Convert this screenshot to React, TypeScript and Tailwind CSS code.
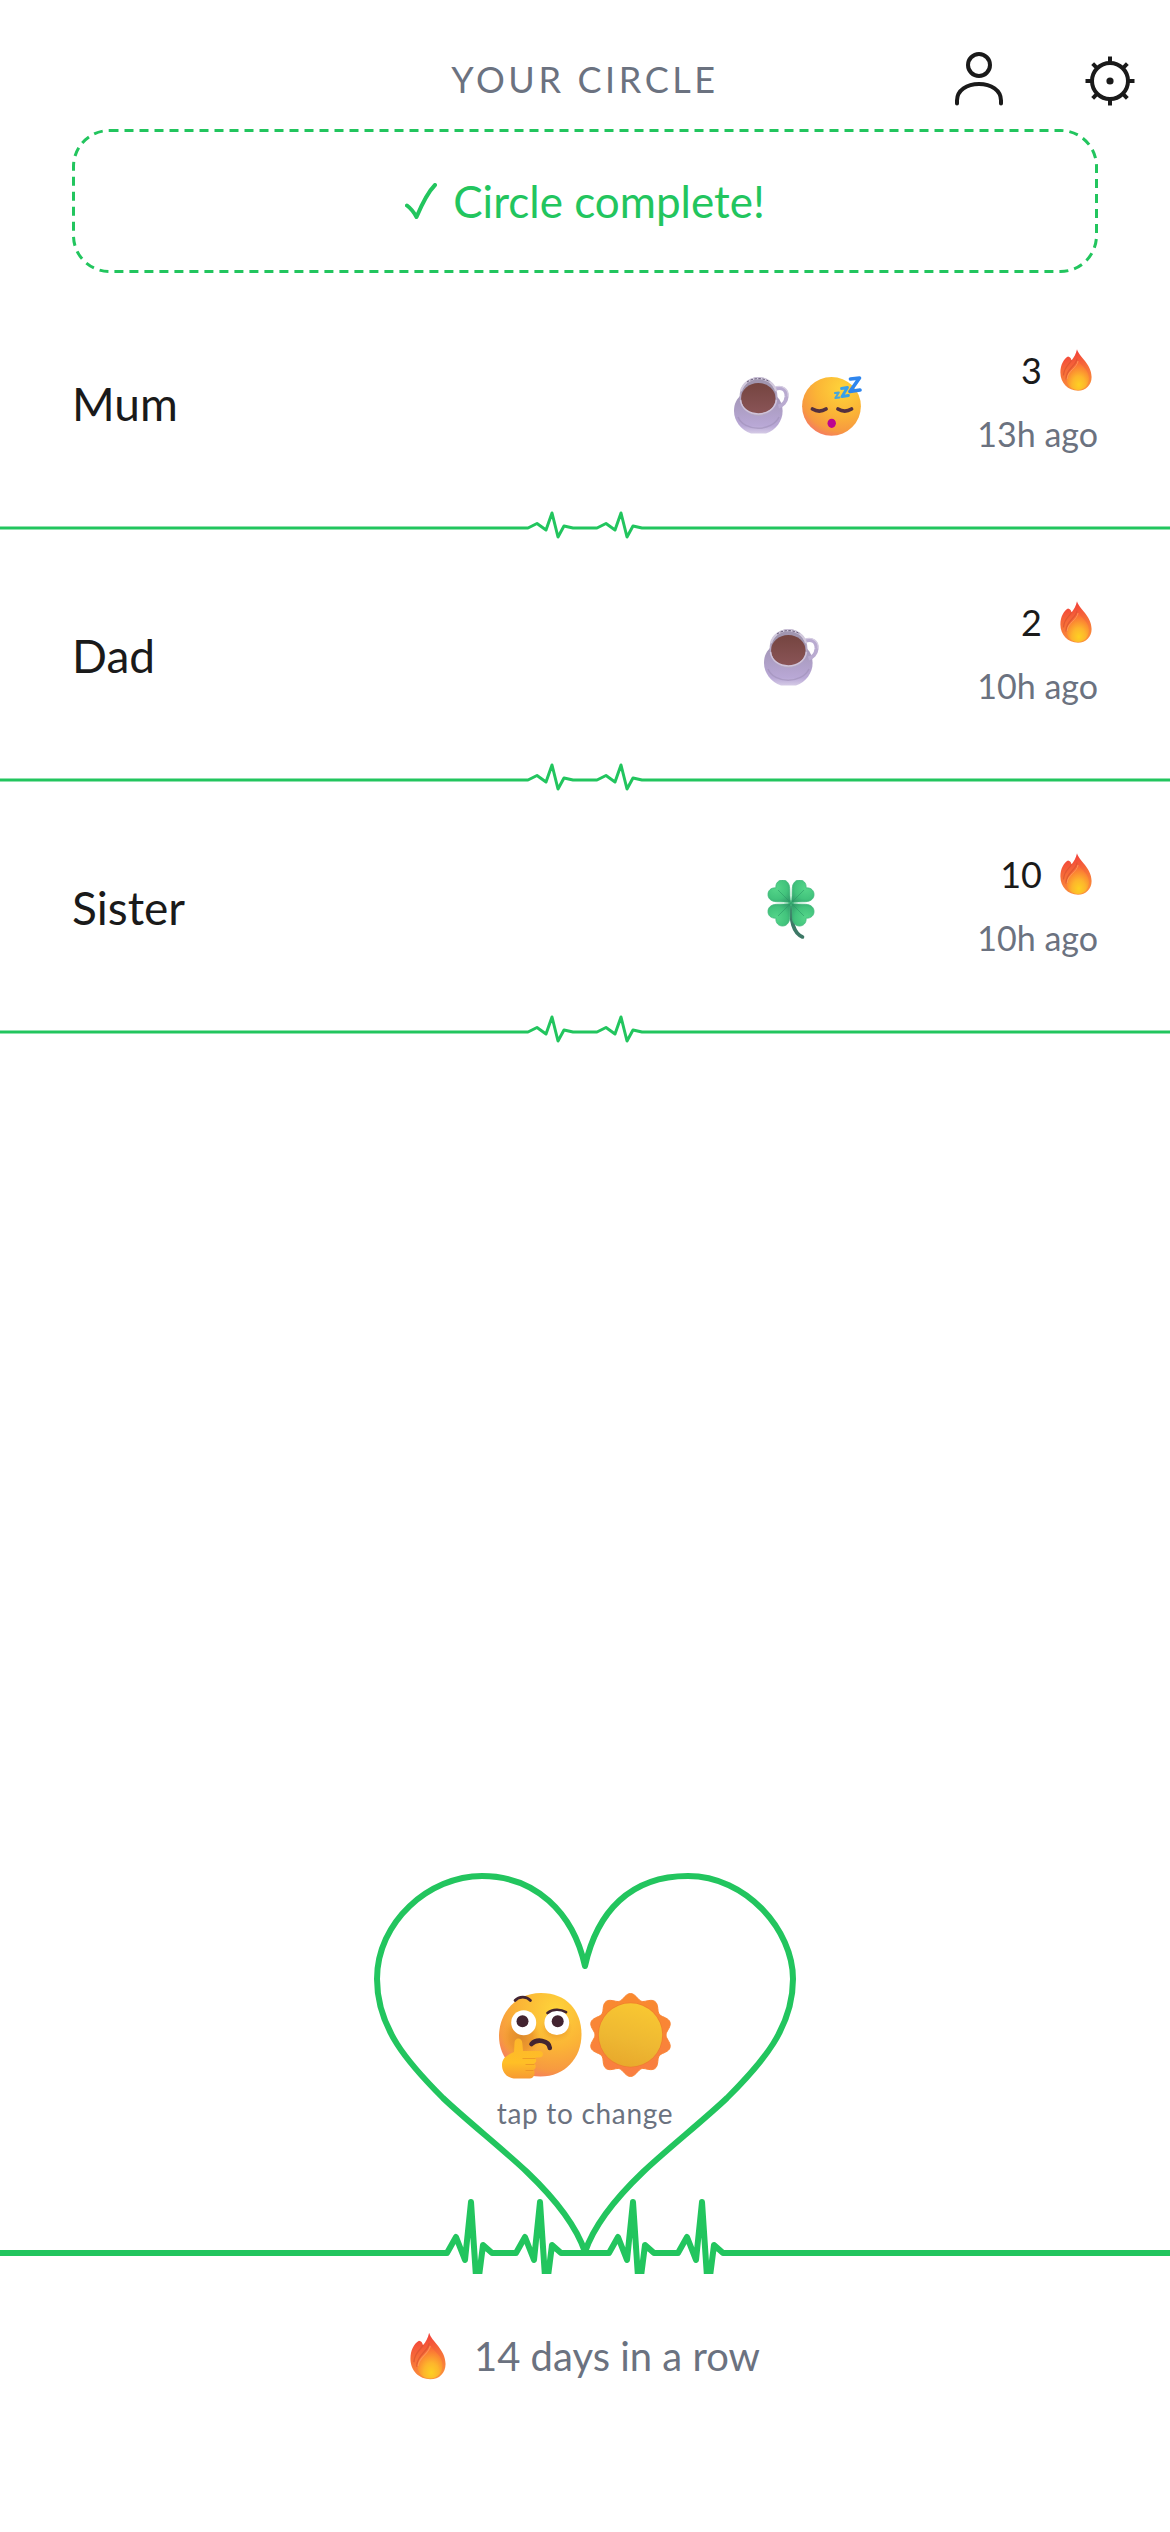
import type { ReactNode } from "react";

function Gradients() {
  return (
    <svg aria-hidden="true" width="0" height="0" className="absolute">
      <defs>
        <linearGradient id="flame" x1="0.4" y1="0" x2="0.6" y2="1">
          <stop offset="0" stopColor="#f23c3a" />
          <stop offset="0.45" stopColor="#f66b38" />
          <stop offset="1" stopColor="#fb923c" />
        </linearGradient>
        <radialGradient id="flameCore" cx="0.55" cy="0.82" r="0.75">
          <stop offset="0" stopColor="#fdd023" />
          <stop offset="0.4" stopColor="#fdb52c" />
          <stop offset="1" stopColor="#fa6a36" />
        </radialGradient>
        <radialGradient id="face" cx="0.68" cy="0.2" r="0.9">
          <stop offset="0" stopColor="#fed43a" />
          <stop offset="0.5" stopColor="#fbb436" />
          <stop offset="0.8" stopColor="#f79a40" />
          <stop offset="1" stopColor="#f5736a" />
        </radialGradient>
        <radialGradient id="faceShade">
          <stop offset="0" stopColor="#dd8a2c" />
          <stop offset="0.6" stopColor="#e8912b" stopOpacity="0.7" />
          <stop offset="1" stopColor="#f0a030" stopOpacity="0" />
        </radialGradient>
        <linearGradient id="hand" x1="0" y1="0" x2="0" y2="1">
          <stop offset="0" stopColor="#fdb62b" />
          <stop offset="0.6" stopColor="#ffbf26" />
          <stop offset="1" stopColor="#f79a33" />
        </linearGradient>
        <linearGradient id="saucer" x1="0" y1="0" x2="0" y2="1">
          <stop offset="0" stopColor="#a497b8" />
          <stop offset="0.8" stopColor="#b9a8d6" />
          <stop offset="1" stopColor="#d5cbe6" />
        </linearGradient>
        <linearGradient id="coffee" x1="0" y1="0" x2="0" y2="1">
          <stop offset="0" stopColor="#754540" />
          <stop offset="1" stopColor="#8a5457" />
        </linearGradient>
        <radialGradient id="leaf" cx="0.35" cy="0.35" r="0.8">
          <stop offset="0" stopColor="#55d68a" />
          <stop offset="0.6" stopColor="#42c37c" />
          <stop offset="1" stopColor="#319a69" />
        </radialGradient>
        <linearGradient id="sunRays" x1="0" y1="0" x2="0" y2="1">
          <stop offset="0" stopColor="#f98a2e" />
          <stop offset="1" stopColor="#f97e42" />
        </linearGradient>
        <linearGradient id="sunDisc" x1="0.7" y1="0" x2="0.4" y2="1">
          <stop offset="0" stopColor="#f9c832" />
          <stop offset="0.6" stopColor="#eeb832" />
          <stop offset="1" stopColor="#e8a92c" />
        </linearGradient>
      </defs>
    </svg>
  );
}

function Fire({ large = false }: { large?: boolean }) {
  return (
    <svg
      role="img"
      aria-label="streak"
      viewBox="0 0 32 42"
      className={large ? "h-12 w-9" : "h-[42px] w-8"}
    >
      <path
        d="M17 .3C19 8 31.6 15 31.6 28c0 8-5.600 13.700-13.600 13.700C8 41.700.4 34 .4 23.500.4 16 3.500 10 8 7.500c2 .3 3 1.500 3.500 4C14 8.500 16 5 17 .3Z"
        fill="url(#flame)"
      />
      <path
        d="M18 12c4 5 11 9 11 17 0 7-4.500 12-11 12-7 0-11.500-5-11.500-11.500C6.500 22 16 20 18 12Z"
        fill="url(#flameCore)"
      />
      <path
        d="M17 10c-1 7-11 10-11 20M11.500 11.500C9 16 4 18 3.500 26"
        fill="none"
        stroke="#d9532f"
        strokeWidth="1.200"
        strokeLinecap="round"
        opacity="0.7"
      />
      <path d="M18 12c-1 7-10.500 10-10.800 18" fill="none" stroke="#ff9a5c" strokeWidth="1" opacity="0.8" />
    </svg>
  );
}

function Coffee() {
  return (
    <svg role="img" aria-label="coffee" viewBox="0 0 68 60" className="h-15 w-[68px]">
      <path
        d="M6 20C1 25 0 30 0 35 0 45 7 54 17 57.500h15C42 54 48.600 45 48.600 35c0-6-2-11-6-15Z"
        fill="url(#saucer)"
      />
      <path d="M4 41c6 15 34 15 41 0" fill="none" stroke="#9f90b8" strokeWidth="1.500" opacity="0.6" />
      <path d="M41 13c7-3 12 1 11.500 8-.5 5-4 8.500-8 9.500" fill="none" stroke="#b9abd0" strokeWidth="4" />
      <path d="M40 11.500c8-3 15 1 14 9" fill="none" stroke="#d6cde2" strokeWidth="1.200" />
      <ellipse cx="24.500" cy="20.500" rx="18.900" ry="19.500" fill="#b5a8c4" />
      <ellipse cx="24.500" cy="20" rx="17.400" ry="17.500" fill="#a196b0" />
      <path d="M7 15C12-2 37-2 42 15" fill="none" stroke="#d2cadd" strokeWidth="2.200" />
      <path d="M13 6c6-4.500 17-4.500 23 0" fill="none" stroke="#665b76" strokeWidth="1" strokeDasharray="2.500 1.500" />
      <ellipse cx="24.300" cy="22.500" rx="17.200" ry="15.500" fill="url(#coffee)" />
      <path d="M6.500 24c2 18.500 33.500 18.500 36 0" fill="none" stroke="#cfc3da" strokeWidth="1.500" />
    </svg>
  );
}

function Sleeping() {
  return (
    <svg role="img" aria-label="sleeping" viewBox="0 0 60 60" className="size-15">
      <circle cx="29.500" cy="30.300" r="29.400" fill="url(#face)" />
      <g fill="none" strokeLinecap="round" stroke="#54303f" strokeWidth="3.800">
        <path d="M10.500 33c4.500 2.800 9 2.800 13.500 0" />
        <path d="M36 33c4.500 2.800 9 2.800 13.500 0" />
      </g>
      <ellipse cx="29.700" cy="47.300" rx="4.200" ry="4.600" fill="#bd0490" />
      <g fill="none" strokeLinejoin="round" strokeLinecap="round">
        <path d="M48.500 3 57.500 2 48 15.500l10-1.500" stroke="#2f86ee" strokeWidth="3.600" />
        <path d="M39.500 12.500l6-1-5.500 9 6.500-1" stroke="#38a0ea" strokeWidth="2.800" />
        <path d="M33 17l3.800-.5-3.500 5.500 4.200-.6" stroke="#4aa6d8" strokeWidth="2" />
      </g>
    </svg>
  );
}

const LEAF =
  "M23 23C21.500 18 22 13 21.700 8.500 21.500 3 18.500 0 14.500 0 10.500 0 7.500 3 7.900 7.900 3 7.500 0 10.500 0 14.500c0 4 3 7 8.500 7.200C13 22 18 21.500 23 23Z";

function Clover() {
  return (
    <svg role="img" aria-label="four leaf clover" viewBox="-4 0 68 60" className="h-15 w-[68px]">
      <path d="M23 23c-.5 18 2 30 11.500 34" fill="none" stroke="#3d7866" strokeWidth="3.600" strokeLinecap="round" />
      {[0, 90, 180, 270].map((turn) => (
        <g key={turn} transform={`rotate(${turn} 23 23)`}>
          <path d={LEAF} fill="url(#leaf)" stroke="#3fb878" strokeWidth="0.800" />
          <path d="M23 23 10 10" stroke="#2c9a67" strokeWidth="1" opacity="0.6" />
        </g>
      ))}
    </svg>
  );
}

function Thinking() {
  return (
    <svg role="img" aria-label="thinking" viewBox="0 0 83 86" className="h-[86px] w-[83px]">
      <path
        d="M42 0c26 0 40.500 18 40.500 41.500S66 83.500 41.500 83.500C16 83.500 0 65 0 43S16 0 42 0Z"
        fill="url(#face)"
      />
      <ellipse cx="22" cy="44" rx="19" ry="22" fill="url(#faceShade)" />
      <ellipse cx="57.500" cy="35" rx="16" ry="14" fill="url(#faceShade)" opacity="0.6" />
      <circle cx="24.700" cy="29.700" r="12.500" fill="#fff" />
      <circle cx="57.800" cy="29.700" r="12.400" fill="#fff" />
      <circle cx="23.500" cy="28.300" r="6" fill="#432430" />
      <circle cx="58.700" cy="28.300" r="6" fill="#432430" />
      <g fill="none" stroke="#432430" strokeLinecap="round">
        <path d="M16 7.500c4-4.500 11.500-4.500 15.500 0" strokeWidth="2.700" />
        <path d="M48.500 20c5-4.200 13-4.200 18.500-.8" strokeWidth="2.700" />
        <path d="M32.500 51c5-5.500 17.500-4 18.300 4" strokeWidth="4.600" />
      </g>
      <path
        d="M15.500 50c0-6 7.500-6 7.800 0l.7 8h16.500c4.500 0 4.500 6 .5 6.300l-5 .5c2 2 1.500 5-1 5.700 2.500 1.500 2 5-.3 6.200 2 2.500.8 8.800-3.700 8.800H17C8 85.500 3 79.500 3 72c0-6.500 4-9.500 12-13Z"
        fill="url(#hand)"
      />
      <path
        d="M24 65.500h12M27 71.500h8M27 77.500h7"
        stroke="#e88d25"
        strokeWidth="1.200"
        strokeLinecap="round"
        opacity="0.7"
      />
    </svg>
  );
}

const SUN_EDGE = Array.from({ length: 180 }, (_, i) => {
  const angle = (i * Math.PI) / 90;
  const radius = 38.5 + 3 * Math.cos(10 * angle);
  const x = 40.5 + radius * Math.sin(angle);
  const y = 42 - radius * Math.cos(angle);
  return `${x.toFixed(2)},${y.toFixed(2)}`;
}).join(" ");

function Sun() {
  return (
    <svg role="img" aria-label="sun" viewBox="0 0 81 86" className="h-[86px] w-[81px]">
      <polygon points={SUN_EDGE} fill="url(#sunRays)" stroke="#f98535" strokeWidth="1" strokeLinejoin="round" />
      <circle cx="40.500" cy="42" r="32.500" fill="#ea7a22" opacity="0.5" />
      <circle cx="40.500" cy="42" r="31.700" fill="url(#sunDisc)" />
    </svg>
  );
}

function PersonIcon() {
  return (
    <svg aria-hidden="true" viewBox="0 0 48 54" className="h-[54px] w-12" fill="none" stroke="#1a1a1a" strokeWidth="4" strokeLinecap="round">
      <circle cx="24" cy="13" r="11" />
      <path d="M2 51.500v-3C2 38 12 32 24 32s22 6 22 16.500v3" />
    </svg>
  );
}

function GearIcon() {
  return (
    <svg aria-hidden="true" viewBox="-25 -25 50 50" className="size-[50px]" fill="none" stroke="#1a1a1a">
      <circle r="18" strokeWidth="4" />
      <circle r="3.600" fill="#1a1a1a" stroke="none" />
      {[0, 45, 90, 135, 180, 225, 270, 315].map((turn) => (
        <path key={turn} d="M0-19v-5.500" strokeWidth="4" transform={`rotate(${turn})`} />
      ))}
    </svg>
  );
}

function PulseDivider() {
  return (
    <svg aria-hidden="true" className="block h-[34px] w-full" fill="none">
      <svg x="50%" className="overflow-visible">
        <path
          d="M-3000 17H-57l9-4.500 9 6.500 6-17 6 24 6-11 9 2H12l9-4.500 9 6.500 6-17 6 24 6-11 9 2H3000"
          stroke="#22c55e"
          strokeWidth="3"
          strokeLinejoin="round"
        />
      </svg>
    </svg>
  );
}

function HeartPulse() {
  return (
    <svg aria-hidden="true" className="block h-[414px] w-full [grid-area:1/1]" fill="none">
      <svg x="50%" className="overflow-visible">
        <g stroke="#22c55e" strokeWidth="6" strokeLinejoin="round" strokeLinecap="round">
          <path d="M0 106C-12 52-50 16-103 16S-208 62-208 119C-208 168-177 203-142 238C-120 259-80 291-58 312C-35 334-10 362 0 392C10 362 35 334 58 312C80 291 120 259 142 238C177 203 208 168 208 119S161 16 103 16S12 52 0 106Z" />
          <path d="M-3000 393H-138l9-16 9 23 6-58 6 90 6-47 9 8H-69l9-16 9 23 6-58 6 90 6-47 9 8H24l9-16 9 23 6-58 6 90 6-47 9 8H93l9-16 9 23 6-58 6 90 6-47 9 8H3000" />
        </g>
      </svg>
    </svg>
  );
}

type Member = { name: string; mood: ReactNode; streak: number; seen: string };

const MEMBERS: Member[] = [
  {
    name: "Mum",
    mood: (
      <>
        <Coffee />
        <Sleeping />
      </>
    ),
    streak: 3,
    seen: "13h ago",
  },
  { name: "Dad", mood: <Coffee />, streak: 2, seen: "10h ago" },
  { name: "Sister", mood: <Clover />, streak: 10, seen: "10h ago" },
];

function MemberRow({ name, mood, streak, seen }: Member) {
  return (
    <li>
      <div className="grid h-[218px] grid-cols-[1fr_136px_232px] items-center px-[72px]">
        <h2 className="pt-1 text-[46px] leading-14">{name}</h2>
        <div className="flex justify-center pt-2">{mood}</div>
        <div className="text-right">
          <p className="flex items-center justify-end gap-[18px] pr-1.5 text-[36px] leading-16">
            {streak}
            <Fire />
          </p>
          <p className="text-[34px] leading-16 text-[#6b7280]">{seen}</p>
        </div>
      </div>
      <PulseDivider />
    </li>
  );
}

export default function App() {
  return (
    <div className="flex min-h-screen flex-col bg-white font-['Lato',sans-serif] text-[#1a1a1a]">
      <Gradients />
      <header className="grid h-[129px] grid-cols-[1fr_auto_1fr] items-center pt-7">
        <h1 className="col-start-2 text-[36px] leading-12 tracking-widest text-[#6b7280]">YOUR CIRCLE</h1>
        <div className="flex items-center justify-end gap-[82px] pr-[35px]">
          <button type="button" aria-label="Profile">
            <PersonIcon />
          </button>
          <button type="button" aria-label="Settings" className="pt-1">
            <GearIcon />
          </button>
        </div>
      </header>

      <main>
        <div className="relative mx-[72px] flex h-[144px] items-center justify-center gap-4 text-[44px] text-[#22c55e]">
          <svg aria-hidden="true" className="absolute inset-0 size-full" fill="none">
            <rect
              x="1.5"
              y="1.5"
              rx="36"
              className="h-[calc(100%-3px)] w-[calc(100%-3px)]"
              stroke="#22c55e"
              strokeWidth="3"
              strokeDasharray="9 6"
            />
          </svg>
          <svg aria-hidden="true" viewBox="0 0 32 36" className="h-9 w-8" fill="none" stroke="#22c55e" strokeWidth="4" strokeLinecap="round" strokeLinejoin="round">
            <path d="M2 22.500c4 3 7 7 9.500 11.500C17 21 22 10 30 2" />
          </svg>
          <p>Circle complete!</p>
        </div>

        <ul className="mt-5">
          {MEMBERS.map((member) => (
            <MemberRow key={member.name} {...member} />
          ))}
        </ul>
      </main>

      <footer className="mt-auto pb-[148px]">
        <div className="grid">
          <HeartPulse />
          <button
            type="button"
            className="mt-[133px] flex flex-col items-center gap-3.5 self-start justify-self-center [grid-area:1/1]"
          >
            <span className="flex gap-2">
              <Thinking />
              <Sun />
            </span>
            <span className="text-[28px] leading-10 tracking-wide text-[#6b7280]">tap to change</span>
          </button>
        </div>
        <p className="mt-[54px] flex items-center justify-center gap-7 text-[40px] leading-14 text-[#6b7280]">
          <Fire large />
          14 days in a row
        </p>
      </footer>
    </div>
  );
}
